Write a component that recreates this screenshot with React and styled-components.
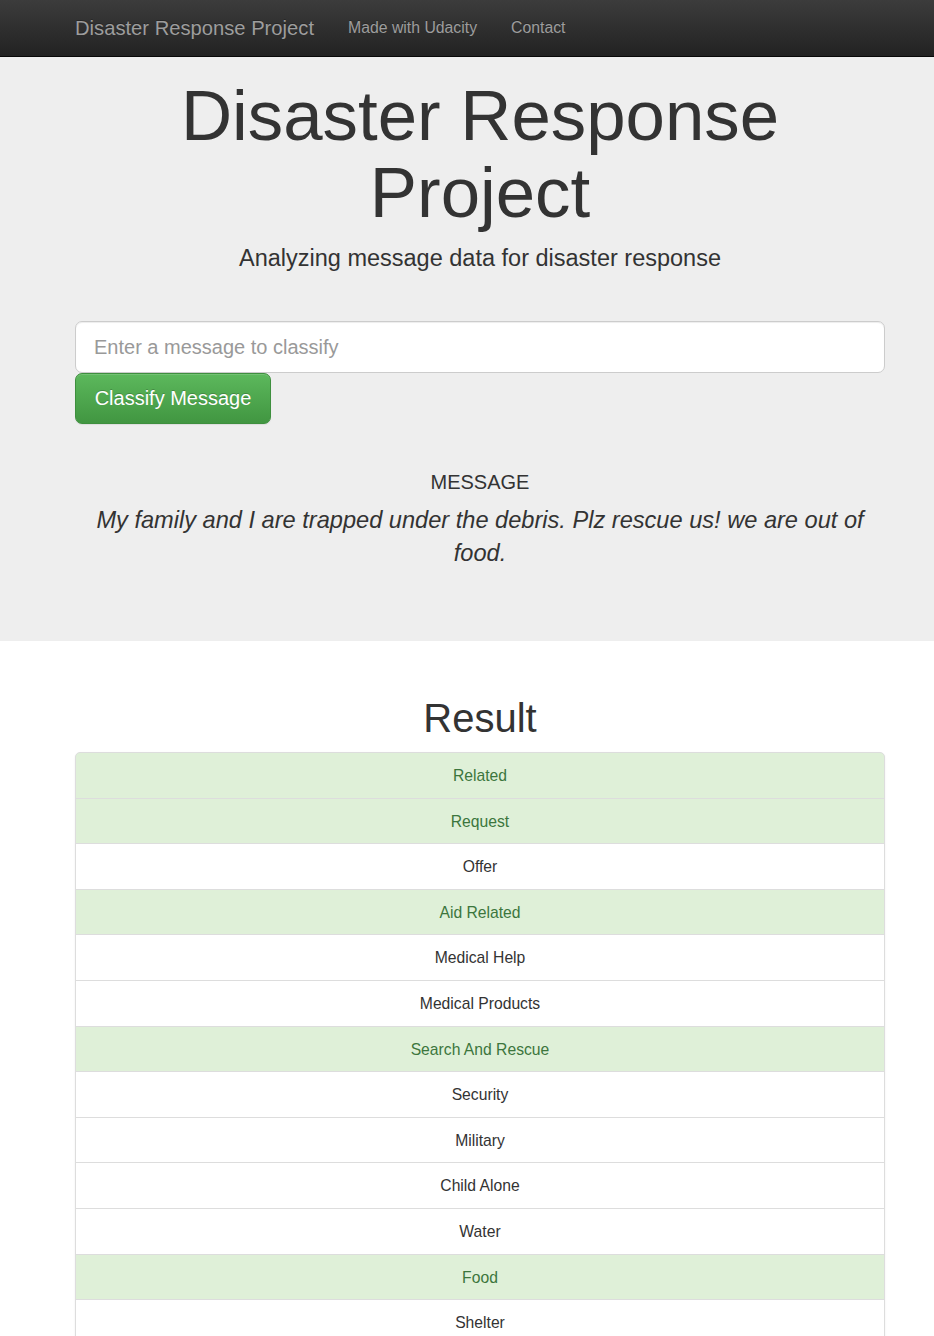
import styled, { createGlobalStyle } from 'styled-components';

const categories = [
    { name: 'Related', hit: true },
    { name: 'Request', hit: true },
    { name: 'Offer' },
    { name: 'Aid Related', hit: true },
    { name: 'Medical Help' },
    { name: 'Medical Products' },
    { name: 'Search And Rescue', hit: true },
    { name: 'Security' },
    { name: 'Military' },
    { name: 'Child Alone' },
    { name: 'Water' },
    { name: 'Food', hit: true },
    { name: 'Shelter' },
    { name: 'Clothing' },
    { name: 'Money' },
    { name: 'Missing People' },
    { name: 'Refugees' },
    { name: 'Death' },
]

export default function App() {
    return (
        <>
            <Global />
            <Navbar>
                <NavInner>
                    <Brand>Disaster Response Project</Brand>
                    <NavLink>Made with Udacity</NavLink>
                    <NavLink>Contact</NavLink>
                </NavInner>
            </Navbar>

            <Jumbotron>
                <Container>
                    <Title>Disaster Response Project</Title>
                    <Lead>Analyzing message data for disaster response</Lead>
                    <form onSubmit={e => e.preventDefault()}>
                        <Input placeholder="Enter a message to classify" />
                        <Button type="submit">Classify Message</Button>
                    </form>
                    <MessageLabel>MESSAGE</MessageLabel>
                    <MessageText>
                        My family and I are trapped under the debris. Plz rescue us! we are out of food.
                    </MessageText>
                </Container>
            </Jumbotron>

            <Container>
                <ResultTitle>Result</ResultTitle>
                <List>
                    {categories.map(c => (
                        <Item key={c.name} $hit={c.hit}>{c.name}</Item>
                    ))}
                </List>
            </Container>
        </>
    )
}

const Global = createGlobalStyle`
    body {
        margin: 0;
        font-family: "Liberation Sans", Arial, sans-serif;
        font-size: 15.7px;
        color: #333;
        background: #fff;
    }
    * { box-sizing: border-box; }
`;

const Navbar = styled.nav`
    height: 57px;
    background-image: linear-gradient(to bottom, #3c3c3c 0%, #222 100%);
    border-bottom: 1px solid #080808;
`;

const NavInner = styled.div`
    display: flex;
    align-items: center;
    height: 56px;
    padding-left: 75px;
`;

const Brand = styled.a`
    font-size: 20.2px;
    color: #9d9d9d;
    text-shadow: 0 -1px 0 rgba(0, 0, 0, 0.25);
    margin-right: 17px;
`;

const NavLink = styled.a`
    font-size: 15.8px;
    color: #9d9d9d;
    text-shadow: 0 -1px 0 rgba(0, 0, 0, 0.25);
    padding: 0 17px;
`;

const Jumbotron = styled.header`
    background: #eee;
    padding: 20px 0 71px;
`;

const Container = styled.div`
    padding: 0 49px 0 75px;
`;

const Title = styled.h1`
    margin: 0;
    font-size: 70.8px;
    font-weight: 500;
    line-height: 77px;
    text-align: center;
`;

const Lead = styled.p`
    margin: 11px 0 46px;
    font-size: 23.5px;
    line-height: 33px;
    text-align: center;
`;

const Input = styled.input`
    display: block;
    width: 100%;
    height: 52px;
    padding: 11px 18px;
    font: inherit;
    font-size: 20px;
    color: #555;
    background: #fff;
    border: 1px solid #ccc;
    border-radius: 7px;
    box-shadow: inset 0 1px 1px rgba(0, 0, 0, 0.075);
    outline: none;

    &::placeholder {
        color: #999;
    }
`;

const Button = styled.button`
    display: block;
    height: 51px;
    width: 196px;
    padding: 0;
    font: inherit;
    font-size: 20px;
    color: #fff;
    text-shadow: 0 -1px 0 rgba(0, 0, 0, 0.2);
    background-image: linear-gradient(to bottom, #5cb85c 0%, #419641 100%);
    border: 1px solid #3e8f3e;
    border-radius: 7px;
    box-shadow: inset 0 1px 0 rgba(255, 255, 255, 0.15), 0 1px 1px rgba(0, 0, 0, 0.075);
`;

const MessageLabel = styled.h4`
    margin: 47px 0 0;
    font-size: 20px;
    font-weight: 500;
    line-height: 22px;
    text-align: center;
`;

const MessageText = styled.p`
    margin: 11px 0 0;
    font-size: 23.6px;
    font-style: italic;
    line-height: 33px;
    text-align: center;
`;

const ResultTitle = styled.h1`
    margin: 55px 0 12px;
    font-size: 40px;
    font-weight: 500;
    line-height: 44px;
    text-align: center;
`;

const List = styled.ul`
    margin: 0;
    padding: 0;
    list-style: none;
    border-radius: 5px;
    box-shadow: 0 1px 2px rgba(0, 0, 0, 0.075);
`;

const Item = styled.li`
    padding: 12px 17px 10px;
    line-height: 22.6px;
    margin-bottom: -1px;
    text-align: center;
    border: 1px solid #ddd;
    background: ${p => (p.$hit ? '#dff0d8' : '#fff')};
    color: ${p => (p.$hit ? '#3c763d' : '#333')};

    &:first-child {
        border-top-left-radius: 5px;
        border-top-right-radius: 5px;
    }
`;
